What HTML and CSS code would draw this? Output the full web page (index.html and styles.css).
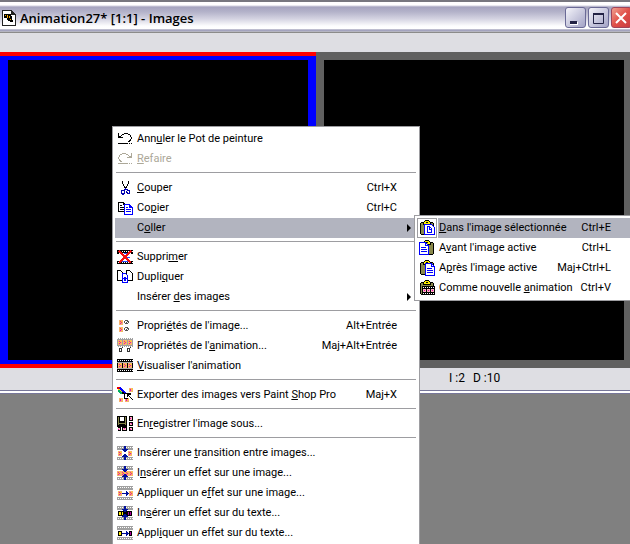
FILE: index.html
```html
<!DOCTYPE html>
<html lang="fr">
<head>
    <meta charset="UTF-8">
    <meta name="viewport" content="width=device-width, initial-scale=1.0">
    <title>Animation27* [1:1] - Images</title>
    <link rel="stylesheet" href="styles.css">
</head>
<body>
    <!-- Formes communes aux icônes -->
    <svg class="sprites" shape-rendering="crispEdges">
        <symbol id="film" viewBox="0 0 16 16">
            <path fill="currentColor" d="M0 1h16v4H0zM0 12h16v3H0z"/>
            <path stroke="#fff" stroke-dasharray="1 1" d="M1 2.500h15M1 13.500h15"/>
        </symbol>
        <symbol id="cell" viewBox="0 0 4 5">
            <path fill="#f7b26b" d="M0 0h4v5H0z"/>
            <path fill="#e800c8" d="M1 1h1v1H1zM2 2h1v1H2zM1 3h1v1H1z"/>
            <path fill="#ffee00" d="M2 1h1v1H2zM1 2h1v1H1z"/>
        </symbol>
        <symbol id="arrows" viewBox="0 0 16 16">
            <path fill="#00109c" d="M7 1h2v3h2v1h-1v1H9v1H7V6H6V5H5V4h2zM7 15h2v-3h2v-1h-1v-1H9V9H7v1H6v1H5v1h2z"/>
        </symbol>
        <symbol id="goto" viewBox="0 0 16 16">
            <path fill="#00109c" d="M5 8h4V6h1v1h1v1h1v1h-1v1h-1v1H9V9H5z"/>
        </symbol>
        <symbol id="board" viewBox="0 0 16 16">
            <path fill="#000" d="M1 3h1V2h3V1h1V0h4v1h1v1h3v1h1v11h-1v1H2v-1H1z"/>
            <path fill="#88884a" d="M2 3h12v11H2z"/>
            <path fill="#000" d="M4 2h8v3H4z"/>
            <path fill="#ffee00" d="M6 1h4v1h1v2H5V2h1z"/>
            <path fill="#000" d="M7 2h2v1H7z"/>
        </symbol>
        <symbol id="page" viewBox="0 0 9 11">
            <path fill="#00f" d="M0 0h6v1h1v1h1v1h1v8H0z"/>
            <path fill="#fff" d="M1 1h4v3h3v6H1z"/>
            <path fill="#00f" d="M2 3h2v1H2zM2 5h5v1H2zM2 7h5v1H2z"/>
        </symbol>
        <symbol id="page-large" viewBox="0 0 10 13">
            <path fill="#00f" d="M0 0h7v1h1v1h1v1h1v10H0z"/>
            <path fill="#fff" d="M1 1h5v3h3v8H1zM7 2h1v1H7z"/>
            <path fill="#00f" d="M2 5h5v1H2zM2 7h6v1H2zM2 9h6v1H2z"/>
        </symbol>
    </svg>

    <div class="window">
        <header class="title-bar">
            <svg class="title-icon" viewBox="0 0 14 16" shape-rendering="crispEdges">
                <path fill="#222" d="M0 0h10v1h1v1h1v1h1v1h1v12H0z"/>
                <path fill="#fff" d="M1 1h8v4h4v10H1z"/>
                <path fill="#000" d="M2 4h7v2h1v4h1v2H8v-1H6v-1H5V8H2z"/>
                <path fill="#f5a800" d="M3 5h1v1H3zM5 5h1v3H5zM7 6h1v2H7zM8 9h1v1H8z"/>
            </svg>
            <h1 class="title">Animation27* [1:1] - Images</h1>
            <div class="title-buttons">
                <button class="title-button" aria-label="Réduire">
                    <svg viewBox="0 0 18 18"><path fill="#fff" d="M4 13h8v3H4z"/><path fill="#222244" d="M4 12h7v3H4z"/></svg>
                </button>
                <button class="title-button" aria-label="Agrandir">
                    <svg viewBox="0 0 18 18"><path fill="none" stroke="#222244" d="M4.500 4.500h10v10h-10z"/><path fill="#222244" d="M4 4h11v2H4z"/></svg>
                </button>
                <button class="title-button close" aria-label="Fermer">
                    <svg viewBox="0 0 18 18"><path stroke="#fff" stroke-width="2" d="M4 4l10 10M14 4L4 14"/></svg>
                </button>
            </div>
        </header>
        <div class="margin-bar"></div>
        <main class="strip">
            <div class="frame selected"></div>
            <div class="frame"></div>
        </main>
        <footer class="status"><span>I :2</span><span>D :10</span></footer>
    </div>

    <div class="menu main-menu" role="menu">
        <button class="item" role="menuitem">
            <svg class="icon" viewBox="0 0 16 16" shape-rendering="crispEdges"><path fill="#000" d="M4 4h1V3h2V2h4v1h2v1h1v2h1v2h-1v2h-1v1h-2v-1h1V9h1V8h1V6h-1V4h-2V3H7v1H5v1H4v1h2v1H1V2h1v3h2zM1 12h10v1H1zM12 12h1v1h-1zM14 12h1v1h-1z"/></svg>
            <span class="label">Ann<u>u</u>ler le Pot de peinture</span>
        </button>
        <button class="item" role="menuitem" disabled>
            <svg class="icon" viewBox="0 0 16 16" shape-rendering="crispEdges"><path fill="#aca899" d="M12 4h-1V3H9V2H5v1H3v1H2v2H1v2h1v2h1v1h2v-1H4V9H3V8H2V6h1V4h2V3h4v1h2v1h1v1h-2v1h5V2h-1v3h-2zM1 12h10v1H1zM12 12h1v1h-1zM14 12h1v1h-1z"/></svg>
            <span class="label"><u>R</u>efaire</span>
        </button>
        <hr>
        <button class="item" role="menuitem">
            <svg class="icon" viewBox="0 0 16 16" shape-rendering="crispEdges">
                <path fill="#000" d="M5 1h1v3h1v2h1v1h1V6h1V4h1V1h1v3h-1v2h-1v2H9v1H8V8H7V6H6V4H5z"/>
                <path fill="none" stroke="#0000b0" d="M8.500 8v2M7 9.500h1M9 9.500h2M6 10.500h-1.500v3h1v1h1v-1h1v-3zM10.500 10.500h2v3h-2v-1h-1v-1z"/>
            </svg>
            <span class="label"><u>C</u>ouper</span><span class="shortcut">Ctrl+X</span>
        </button>
        <button class="item" role="menuitem">
            <svg class="icon" viewBox="0 0 16 16" shape-rendering="crispEdges">
                <path fill="#000" d="M1 2h6v1h1v1h1v8H1z"/><path fill="#fff" d="M2 3h4v2h2v6H2z"/><path fill="#000" d="M3 5h2v1H3zM3 7h4v1H3zM3 9h4v1H3z"/>
                <use href="#page" x="7" y="4" width="9" height="11"/>
            </svg>
            <span class="label">Co<u>p</u>ier</span><span class="shortcut">Ctrl+C</span>
        </button>
        <button class="item active" role="menuitem" aria-haspopup="true">
            <span class="icon"></span>
            <span class="label">C<u>o</u>ller</span><span class="arrow"></span>
        </button>
        <hr>
        <button class="item" role="menuitem">
            <svg class="icon film-black" viewBox="0 0 16 16" shape-rendering="crispEdges">
                <use href="#film" width="16" height="16"/>
                <path fill="#fff" d="M2 4h12v8H2z"/>
                <path fill="#2a4cff" d="M7 4h6v1H7zM5 12h7v1H5zM10 8h3v1h-3z"/>
                <path stroke="#f01010" stroke-width="2" d="M2 2l12 12M14 2L2 14"/>
            </svg>
            <span class="label">Suppri<u>m</u>er</span>
        </button>
        <button class="item" role="menuitem">
            <svg class="icon" viewBox="0 0 16 16" shape-rendering="crispEdges">
                <path fill="#fff" stroke="#000" d="M.500 1.500h3l2 2v8h-5zM9.500 1.500h3l3 3v7h-6z"/>
                <path fill="#fff" stroke="#00f" d="M5.500 4.500h3l2 2v7h-5z"/>
                <path fill="#00f" d="M7 8h2v1h1v1H9v2H7v-2H6V9h1z"/>
            </svg>
            <span class="label">Dupli<u>q</u>uer</span>
        </button>
        <button class="item" role="menuitem" aria-haspopup="true">
            <span class="icon"></span>
            <span class="label">Insérer <u>d</u>es images</span><span class="arrow"></span>
        </button>
        <hr>
        <button class="item" role="menuitem">
            <svg class="icon" viewBox="0 0 16 16" shape-rendering="crispEdges">
                <use href="#cell" x="2" y="2" width="4" height="5"/><use href="#cell" x="2" y="9" width="4" height="5"/>
                <path fill="none" stroke="#555" d="M7.500 3v2M8 2.500h3M11.500 3v2M8 5.500h3M9 4.500h1M10 3.500h1M7.500 10v2M8 9.500h3M11.500 10v2M8 12.500h3M9 11.500h1M10 10.500h1"/>
            </svg>
            <span class="label">Propri<u>é</u>tés de l'image...</span><span class="shortcut">Alt+Entrée</span>
        </button>
        <button class="item" role="menuitem">
            <svg class="icon" viewBox="0 0 16 16" shape-rendering="crispEdges">
                <path fill="#a0a0a0" d="M0 0h16v9H0z"/><path stroke="#fff" stroke-dasharray="1 1" d="M0 .500h16M0 8.500h16"/>
                <use href="#cell" x="1" y="2" width="4" height="5"/><use href="#cell" x="6" y="2" width="4" height="5"/><use href="#cell" x="11" y="2" width="4" height="5"/>
                <path fill="none" stroke="#333" d="M2.500 10.500h2v3h-2zM10.500 10.500h2v3h-2z"/><path fill="#333" d="M5 9h1v1H5zM13 9h1v1h-1z"/>
            </svg>
            <span class="label">Propriétés de l'<u>a</u>nimation...</span><span class="shortcut">Maj+Alt+Entrée</span>
        </button>
        <button class="item" role="menuitem">
            <svg class="icon" viewBox="0 0 16 16" shape-rendering="crispEdges">
                <path fill="#000" d="M0 1h16v13H0z"/><path stroke="#fff" stroke-dasharray="1 1" d="M1 2.500h15M1 12.500h15"/>
                <path fill="#aaa" d="M0 4h16v1H0zM0 10h16v1H0z"/>
                <use href="#cell" x="1" y="5" width="4" height="5"/><use href="#cell" x="6" y="5" width="4" height="5"/><use href="#cell" x="11" y="5" width="4" height="5"/>
            </svg>
            <span class="label"><u>V</u>isualiser l'animation</span>
        </button>
        <hr>
        <button class="item" role="menuitem">
            <svg class="icon" viewBox="0 0 16 16" shape-rendering="crispEdges">
                <path fill="#e00" d="M0 0h4v2H0z"/><path fill="#ffe000" d="M0 2l4-1 5 5-3 1z"/><path fill="#00b060" d="M0 4l2-1 4 4H4z"/><path fill="#00f" d="M3 0l7 6-1 1-7-5z"/>
                <use href="#cell" x="12" y="1" width="4" height="4"/><use href="#cell" x="2" y="11" width="4" height="4"/><use href="#cell" x="8" y="11" width="4" height="4"/>
                <path fill="#000" d="M5 5h2v1h7v1H8v4h3v1H7V7H5zM10 7h4v1h-2v1h1v1h1v1h1v1h1v1h-1v-1h-1v-1h-1v-1h-1V9h-1v1h-1z"/>
            </svg>
            <span class="label">Exporter des images vers Paint <u>S</u>hop Pro</span><span class="shortcut">Maj+X</span>
        </button>
        <hr>
        <button class="item" role="menuitem">
            <svg class="icon" viewBox="0 0 16 16" shape-rendering="crispEdges">
                <path fill="#000" d="M0 0h10v15H0zM12 0h4v5h-4zM12 6h4v4h-4zM12 11h4v4h-4zM5 11h5v4H5z"/>
                <path fill="#88884a" d="M1 1h1v8H1zM8 1h1v8H8zM2 7h6v1H2z"/>
                <path fill="#fff" d="M3 1h4v4H3zM0 11h1v4H0zM4 11h1v4H4z"/>
                <path fill="#ffb0c0" d="M13 1h2v3h-2zM13 7h2v2h-2zM13 12h2v2h-2zM6 12h3v2H6zM1 12h2v2H1z"/>
                <path fill="#e000b0" d="M13 2h1v1h-1zM14 7h1v1h-1zM13 13h1v1h-1zM7 12h1v1H7zM1 13h1v1H1z"/>
            </svg>
            <span class="label">En<u>r</u>egistrer l'image sous...</span>
        </button>
        <hr>
        <button class="item" role="menuitem">
            <svg class="icon film-grey" viewBox="0 0 16 16" shape-rendering="crispEdges">
                <use href="#film" width="16" height="16"/>
                <use href="#cell" x="1" y="6" width="4" height="5"/><use href="#cell" x="11" y="6" width="4" height="5"/>
                <use href="#arrows" width="16" height="16"/>
            </svg>
            <span class="label">Insérer une <u>t</u>ransition entre images...</span>
        </button>
        <button class="item" role="menuitem">
            <svg class="icon film-grey" viewBox="0 0 16 16" shape-rendering="crispEdges">
                <use href="#film" width="16" height="16"/>
                <use href="#cell" x="0" y="6" width="4" height="5"/><use href="#cell" x="4" y="6" width="4" height="5"/><use href="#cell" x="8" y="6" width="4" height="5"/><use href="#cell" x="12" y="6" width="4" height="5"/>
                <use href="#arrows" width="16" height="16"/>
            </svg>
            <span class="label">I<u>n</u>sérer un effet sur une image...</span>
        </button>
        <button class="item" role="menuitem">
            <svg class="icon film-grey" viewBox="0 0 16 16" shape-rendering="crispEdges">
                <use href="#film" width="16" height="16"/>
                <use href="#cell" x="1" y="6" width="4" height="5"/><use href="#cell" x="12" y="6" width="4" height="5"/>
                <use href="#goto" width="16" height="16"/>
            </svg>
            <span class="label">Appliquer un e<u>f</u>fet sur une image...</span>
        </button>
        <button class="item" role="menuitem">
            <svg class="icon film-grey" viewBox="0 0 16 16" shape-rendering="crispEdges">
                <use href="#film" width="16" height="16"/>
                <path fill="#000" d="M1 6h14v5H1z"/><path fill="#ffee00" d="M2 7h2v3H2zM5 7h1v3H5z"/><path fill="#b000a0" d="M11 7h1v3h-1zM13 7h1v3h-1z"/>
                <use href="#arrows" width="16" height="16"/>
            </svg>
            <span class="label">In<u>s</u>érer un effet sur du texte...</span>
        </button>
        <button class="item" role="menuitem">
            <svg class="icon film-grey" viewBox="0 0 16 16" shape-rendering="crispEdges">
                <use href="#film" width="16" height="16"/>
                <path fill="#000" d="M1 6h4v5H1zM12 6h3v5h-3z"/><path fill="#ffee00" d="M2 7h2v3H2z"/><path fill="#b000a0" d="M13 7h1v3h-1z"/>
                <use href="#goto" width="16" height="16"/>
            </svg>
            <span class="label">Appl<u>i</u>quer un effet sur du texte...</span>
        </button>
    </div>

    <div class="menu sub-menu" role="menu">
        <button class="item active" role="menuitem">
            <svg class="icon" viewBox="0 0 16 16" shape-rendering="crispEdges">
                <use href="#board" width="16" height="16"/>
                <path fill="#fff" stroke="#00f" d="M5.500 4.500h7l3 3v7h-10z"/><path fill="none" stroke="#00f" d="M8.500 6.500h2l2 2v4h-4zM10.500 7v2h2"/>
            </svg>
            <span class="label"><u>D</u>ans l'image sélectionnée</span><span class="shortcut">Ctrl+E</span>
        </button>
        <button class="item" role="menuitem">
            <svg class="icon" viewBox="0 0 16 16" shape-rendering="crispEdges">
                <use href="#board" width="16" height="16"/><use href="#page-large" x="0" y="2" width="10" height="13"/>
            </svg>
            <span class="label">A<u>v</u>ant l'image active</span><span class="shortcut">Ctrl+L</span>
        </button>
        <button class="item" role="menuitem">
            <svg class="icon" viewBox="0 0 16 16" shape-rendering="crispEdges">
                <use href="#board" width="16" height="16"/><use href="#page-large" x="6" y="3" width="10" height="13"/>
            </svg>
            <span class="label">A<u>p</u>rès l'image active</span><span class="shortcut">Maj+Ctrl+L</span>
        </button>
        <button class="item" role="menuitem">
            <svg class="icon" viewBox="0 0 16 16" shape-rendering="crispEdges">
                <use href="#board" width="16" height="16"/>
                <path fill="#000" d="M3 6h13v9H3z"/><path stroke="#fff" stroke-dasharray="1 1" d="M4 7.500h12M4 13.500h12"/>
                <path fill="#ffb0c0" d="M4 9h3v3H4zM8 9h3v3H8zM12 9h3v3h-3z"/><path fill="#e000b0" d="M5 10h1v1H5zM9 10h1v1H9zM13 10h1v1h-1z"/>
            </svg>
            <span class="label">Comme nouvelle <u>a</u>nimation</span><span class="shortcut">Ctrl+V</span>
        </button>
    </div>
</body>
</html>
```
FILE: styles.css
```css
* {
    margin: 0;
    padding: 0;
    box-sizing: border-box;
}

body {
    font-family: Tahoma, Roboto, sans-serif;
    font-size: 11px;
    line-height: 20px;
    color: #000;
    background: #808080;
    height: 100vh;
    overflow: hidden;
    position: relative;
}

.sprites {
    position: absolute;
    width: 0;
    height: 0;
}

/* Fenêtre */
.window {
    border-top: 2px solid #77777f;
    border-bottom: 1px solid #77779a;
    overflow: hidden;
}

.title-bar {
    display: flex;
    align-items: center;
    height: 31px;
    padding-left: 2px;
    background: linear-gradient(#fff 0, #fff 3px, #a5a4bf 5px, #b4b3ca 10px, #d5d4e2 17px, #fdfdfe 24px, #fff 27px, #7d7ca0 28px, #c9c9dc 29px, #77776f 31px);
}

.title-icon {
    width: 14px;
    height: 16px;
    margin-right: 4px;
}

.title {
    flex: 1;
    font-family: 'Trebuchet MS', 'Open Sans', sans-serif;
    font-size: 13px;
    font-weight: 600;
    white-space: nowrap;
}

.title-buttons {
    display: flex;
    gap: 2px;
    margin-right: -2px;
}

.title-button {
    width: 21px;
    height: 21px;
    border: 1px solid #6a6a96;
    border-radius: 3px;
    background: linear-gradient(135deg, #f4f4fa, #c3c3da 60%, #a3a3c6);
}

.title-button svg {
    display: block;
    width: 18px;
    height: 18px;
}

.title-button.close {
    border-color: #a04458;
    background: linear-gradient(135deg, #f0a090, #e05048 50%, #c83c40);
}

.margin-bar {
    height: 19px;
    background: #dedee3;
}

/* Vignettes de l'animation */
.strip {
    display: flex;
    background: #606060;
}

.frame {
    flex: none;
    width: 316px;
    height: 316px;
    background: #000;
    border: 8px solid #606060;
}

.frame.selected {
    height: 308px;
    margin: 4px 0;
    border-color: #00f;
    border-width: 4px 8px;
    box-shadow: 0 -4px #f00, 0 4px #f00;
}

.status {
    display: flex;
    gap: 8px;
    height: 25px;
    padding-left: 449px;
    background: #dedee3;
    border-bottom: 2px solid #fff;
    box-shadow: inset 0 -1px #77779a;
    font-size: 12px;
}

/* Menus contextuels */
.menu {
    position: absolute;
    background: #fff;
    border: 1px solid #9d9da1;
    padding: 2px;
}

.main-menu {
    left: 112px;
    top: 126px;
    width: 308px;
    padding-bottom: 24px;
}

.sub-menu {
    left: 414px;
    top: 215px;
    width: 222px;
}

.item {
    display: flex;
    align-items: center;
    width: 100%;
    height: 20px;
    padding: 0 20px 0 2px;
    border: none;
    background: none;
    color: #000;
    font: inherit;
    text-align: left;
    white-space: nowrap;
}

.item:disabled {
    color: #aca899;
}

.item.active {
    background: #b2b4bf;
}

.icon {
    flex: none;
    width: 16px;
    height: 16px;
    margin-right: 4px;
}

.film-black {
    color: #000;
}

.film-grey {
    color: #a0a0a0;
}

.label {
    flex: 1;
}

.arrow {
    margin-right: -14px;
    border: 4px solid transparent;
    border-left-color: #000;
    border-right: none;
}

.menu hr {
    height: 1px;
    margin: 3px 1px 5px;
    border: none;
    background: #9d9da1;
}

.sub-menu .item {
    padding-right: 22px;
}

.sub-menu .item.active {
    background: linear-gradient(90deg, #fff 21px, #b2b4bf 21px);
}

.sub-menu .active .icon {
    outline: 1px solid #9d9da1;
    outline-offset: 1px;
}
```
